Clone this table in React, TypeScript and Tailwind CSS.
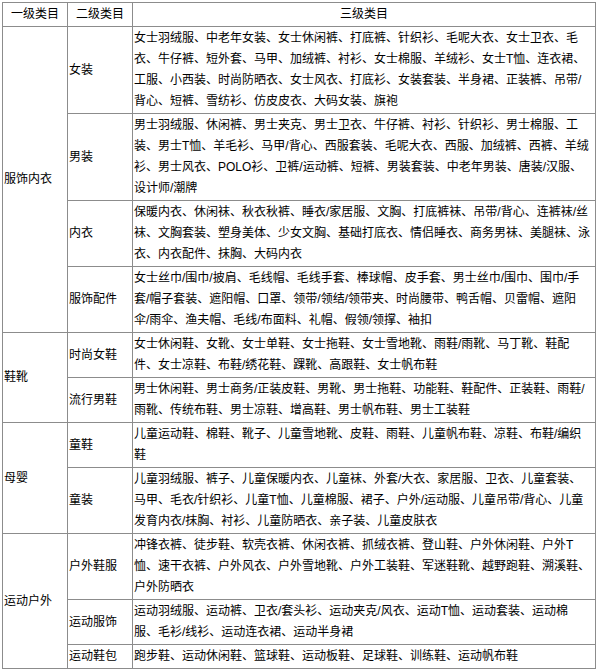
import React from "react";

type Sub = { name: string; lines: string[] };
type Group = { name: string; subs: Sub[] };

const data: Group[] = [
  {
    name: "服饰内衣",
    subs: [
      {
        name: "女装",
        lines: [
          "女士羽绒服、中老年女装、女士休闲裤、打底裤、针织衫、毛呢大衣、女士卫衣、毛",
          "衣、牛仔裤、短外套、马甲、加绒裤、衬衫、女士棉服、羊绒衫、女士T恤、连衣裙、",
          "工服、小西装、时尚防晒衣、女士风衣、打底衫、女装套装、半身裙、正装裤、吊带/",
          "背心、短裤、雪纺衫、仿皮皮衣、大码女装、旗袍",
        ],
      },
      {
        name: "男装",
        lines: [
          "男士羽绒服、休闲裤、男士夹克、男士卫衣、牛仔裤、衬衫、针织衫、男士棉服、工",
          "装、男士T恤、羊毛衫、马甲/背心、西服套装、毛呢大衣、西服、加绒裤、西裤、羊绒",
          "衫、男士风衣、POLO衫、卫裤/运动裤、短裤、男装套装、中老年男装、唐装/汉服、",
          "设计师/潮牌",
        ],
      },
      {
        name: "内衣",
        lines: [
          "保暖内衣、休闲袜、秋衣秋裤、睡衣/家居服、文胸、打底裤袜、吊带/背心、连裤袜/丝",
          "袜、文胸套装、塑身美体、少女文胸、基础打底衣、情侣睡衣、商务男袜、美腿袜、泳",
          "衣、内衣配件、抹胸、大码内衣",
        ],
      },
      {
        name: "服饰配件",
        lines: [
          "女士丝巾/围巾/披肩、毛线帽、毛线手套、棒球帽、皮手套、男士丝巾/围巾、围巾/手",
          "套/帽子套装、遮阳帽、口罩、领带/领结/领带夹、时尚腰带、鸭舌帽、贝雷帽、遮阳",
          "伞/雨伞、渔夫帽、毛线/布面料、礼帽、假领/领撑、袖扣",
        ],
      },
    ],
  },
  {
    name: "鞋靴",
    subs: [
      {
        name: "时尚女鞋",
        lines: [
          "女士休闲鞋、女靴、女士单鞋、女士拖鞋、女士雪地靴、雨鞋/雨靴、马丁靴、鞋配",
          "件、女士凉鞋、布鞋/绣花鞋、踝靴、高跟鞋、女士帆布鞋",
        ],
      },
      {
        name: "流行男鞋",
        lines: [
          "男士休闲鞋、男士商务/正装皮鞋、男靴、男士拖鞋、功能鞋、鞋配件、正装鞋、雨鞋/",
          "雨靴、传统布鞋、男士凉鞋、增高鞋、男士帆布鞋、男士工装鞋",
        ],
      },
    ],
  },
  {
    name: "母婴",
    subs: [
      {
        name: "童鞋",
        lines: [
          "儿童运动鞋、棉鞋、靴子、儿童雪地靴、皮鞋、雨鞋、儿童帆布鞋、凉鞋、布鞋/编织",
          "鞋",
        ],
      },
      {
        name: "童装",
        lines: [
          "儿童羽绒服、裤子、儿童保暖内衣、儿童袜、外套/大衣、家居服、卫衣、儿童套装、",
          "马甲、毛衣/针织衫、儿童T恤、儿童棉服、裙子、户外/运动服、儿童吊带/背心、儿童",
          "发育内衣/抹胸、衬衫、儿童防晒衣、亲子装、儿童皮肤衣",
        ],
      },
    ],
  },
  {
    name: "运动户外",
    subs: [
      {
        name: "户外鞋服",
        lines: [
          "冲锋衣裤、徒步鞋、软壳衣裤、休闲衣裤、抓绒衣裤、登山鞋、户外休闲鞋、户外T",
          "恤、速干衣裤、户外风衣、户外雪地靴、户外工装鞋、军迷鞋靴、越野跑鞋、溯溪鞋、",
          "户外防晒衣",
        ],
      },
      {
        name: "运动服饰",
        lines: [
          "运动羽绒服、运动裤、卫衣/套头衫、运动夹克/风衣、运动T恤、运动套装、运动棉",
          "服、毛衫/线衫、运动连衣裙、运动半身裙",
        ],
      },
      {
        name: "运动鞋包",
        lines: ["跑步鞋、运动休闲鞋、篮球鞋、运动板鞋、足球鞋、训练鞋、运动帆布鞋"],
      },
    ],
  },
];

const cell =
  "border border-[#8c8c8c] px-[1px] py-[1px] align-middle text-left whitespace-nowrap";

export default function App() {
  return (
    <div
      className="bg-white w-[598px] h-[672px] pt-[2px] pl-[2px] text-[12px] leading-[21px] text-black"
      style={{ fontFamily: '"Liberation Sans", "Noto Sans CJK SC", sans-serif' }}
    >
      <table className="table-fixed border-collapse border border-[#333] w-[594px]">
        <colgroup>
          <col className="w-[65px]" />
          <col className="w-[65px]" />
          <col />
        </colgroup>
        <thead>
          <tr>
            <th className={`${cell} !text-center font-normal`}>一级类目</th>
            <th className={`${cell} !text-center font-normal`}>二级类目</th>
            <th className={`${cell} !text-center font-normal`}>三级类目</th>
          </tr>
        </thead>
        <tbody>
          {data.map((g) =>
            g.subs.map((s, i) => (
              <tr key={g.name + s.name}>
                {i === 0 && (
                  <td className={cell} rowSpan={g.subs.length}>
                    {g.name}
                  </td>
                )}
                <td className={cell}>{s.name}</td>
                <td className={cell}>
                  {s.lines.map((l, k) => (
                    <div key={k}>{l}</div>
                  ))}
                </td>
              </tr>
            ))
          )}
        </tbody>
      </table>
    </div>
  );
}
